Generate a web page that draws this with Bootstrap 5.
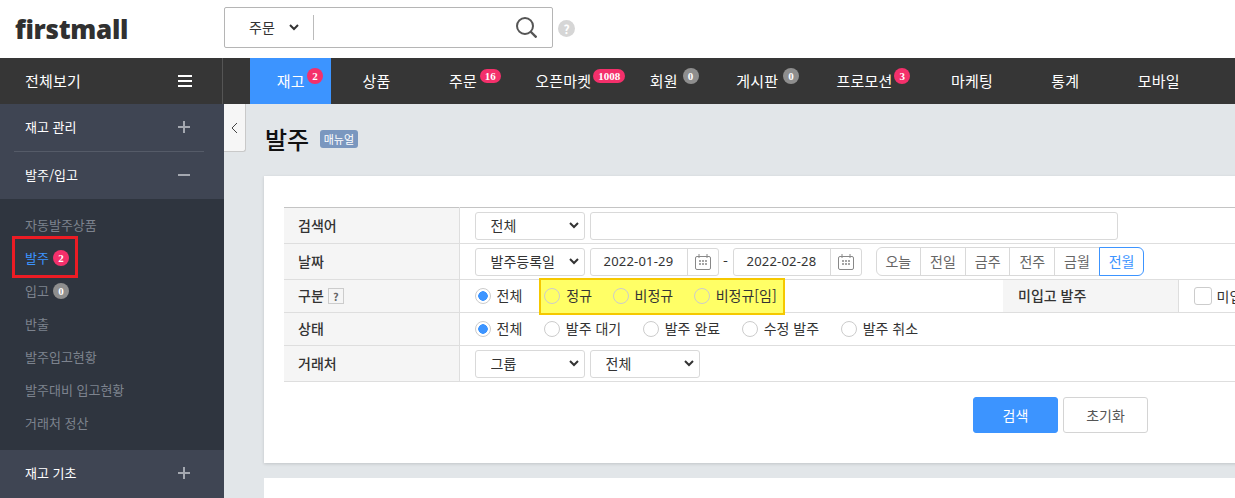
<!DOCTYPE html>
<html lang="ko">
<head>
<meta charset="UTF-8">
<meta name="viewport" content="width=device-width, initial-scale=1.0">
<title>발주</title>
<link rel="stylesheet" href="https://cdn.jsdelivr.net/npm/bootstrap@5.3.0/dist/css/bootstrap.min.css">
<style>
    html, body { height: 498px; overflow: hidden; }
    body { font-family: "Noto Sans CJK KR", "Noto Sans", sans-serif; font-size: 14px; color: #333; background: #e2e6e9; }
    .top-head { height: 58px; background: #fff; }
    .logo-word { width: 224px; padding-left: 15px; font-family: "Open Sans", sans-serif; font-weight: 800; font-size: 26px; letter-spacing: -0.3px; color: #303030; line-height: 58px; }
    .search-box { width: 329px; height: 41px; margin-top: 7px; border: 1px solid #b5b5b5; border-radius: 2px; }
    .search-type { width: 89px; height: 25px; padding-left: 24px; border-right: 1px solid #bbb; font-size: 14px; }
    .search-type svg { margin-left: 14px; }
    .search-icon { margin: 0 15px 0 auto; }
    .help-dot { width: 17px; height: 17px; margin: 20px 0 0 5px; border-radius: 50%; background: #d6d6d6; color: #fff; font-size: 12px; font-weight: 700; line-height: 17px; text-align: center; }
    .main-nav { height: 46px; background: #363636; color: #fff; font-size: 15px; letter-spacing: 0.2px; }
    .all-view { width: 223px; padding: 0 30px 0 25px; border-right: 1px solid #555; }
    .burger { width: 14px; height: 12px; border-top: 2px solid #fff; border-bottom: 2px solid #fff; position: relative; }
    .burger::after { content: ""; position: absolute; left: 0; right: 0; top: 3px; height: 2px; background: #fff; }
    .tab-list { padding-left: 25px; }
    .tab-item { position: relative; height: 46px; padding: 0 29.2px; line-height: 46px; white-space: nowrap; }
    .tab-item.is-on { margin: 0 2px; padding: 0 26.7px; background: #3c94ff; }
    .num-pill { position: absolute; top: 10px; min-width: 16px; height: 16px; padding: 0 4px; border-radius: 9px; background: #f4306b; color: #fff; font-family: "Liberation Serif", serif; font-size: 11px; font-weight: 700; letter-spacing: 0; line-height: 16px; text-align: center; }
    .num-pill.is-zero { background: #8e8e8e; }
    .num-pill.is-wide { top: 11px; height: 14px; line-height: 14px; padding: 0 5px; }
    .page-body { height: 394px; }
    .side-menu { width: 224px; flex: none; background: #3f4553; color: #fff; }
    .side-head { height: 47px; margin: 0 20px 0 14px; padding: 0 14px 2px 11px; font-size: 13px; }
    .side-head.has-line { height: 48px; border-bottom: 1px solid #555b68; }
    .side-sub { height: 251px; padding-top: 9px; background: #2f353f; }
    .side-link { position: relative; height: 33px; padding-left: 25px; gap: 4px; color: #7d838e; font-size: 13px; }
    .side-link.is-on { color: #3c94ff; }
    .side-link .num-pill { position: static; padding: 0; }
    .red-mark { position: absolute; left: 12px; top: -5px; width: 66px; height: 42px; border: 3px solid #ec1c24; }
    .collapse-tab { width: 22px; height: 48px; flex: none; background: #f6f6f6; border: 1px solid #c9c9c9; border-width: 0 1px 1px 0; border-radius: 0 0 3px 0; }
    .content-wrap { position: relative; min-width: 0; flex: 1; padding-left: 18px; }
    .title-line { height: 72px; gap: 11px; padding: 0 0 2px 1px; }
    .title-line h1 { margin: 0; font-size: 24px; font-weight: 500; color: #111; }
    .manual-tag { padding: 0 3.5px; height: 18px; border-radius: 3px; background: #7a97bf; color: #fff; font-size: 11px; line-height: 18px; }
    .form-panel { width: 1000px; height: 287px; padding: 31px 0 0 20px; background: #fff; box-shadow: 0 1px 3px rgba(0,0,0,.15); }
    .next-panel { width: 1000px; height: 60px; margin-top: 15px; background: #fff; }
    .search-table { width: 980px; table-layout: fixed; border-top: 1px solid #c4c4c4; border-collapse: collapse; }
    .search-table th, .search-table td { border-bottom: 1px solid #dedede; vertical-align: middle; white-space: nowrap; }
    .search-table th { padding-left: 14px; background: #f5f5f5; border-right: 1px solid #dedede; font-weight: 500; font-size: 14px; color: #333; }
    .search-table td { padding: 0 0 0 15px; }
    .search-table th.mid-th { padding-left: 15px; }
    .row-a { height: 36px; }
    .row-b { height: 33px; }
    .search-table .row-b th { padding-bottom: 2px; }
    .field-gap { gap: 5px; }
    .form-select.field-sel { width: 110px; height: 28px; padding: 0 20px 0 15px; border-color: #d9d9d9; border-radius: 3px; font-size: 14px; color: #333; background-image: url("data:image/svg+xml,%3csvg xmlns='http://www.w3.org/2000/svg' viewBox='0 0 10 7'%3e%3cpath d='M1 1l4 4 4-4' fill='none' stroke='%23333' stroke-width='2'/%3e%3c/svg%3e"); background-position: right 5px center; background-size: 10px 7px; }
    .form-control.field-in { height: 28px; padding: 0 10px; border-color: #d9d9d9; border-radius: 3px; font-size: 13px; color: #333; box-shadow: none; }
    .date-box { width: 129px; height: 28px; border: 1px solid #d9d9d9; border-radius: 3px; }
    .date-box.first-date { margin-left: 5px; }
    .date-box span { width: 98px; padding-left: 13px; font-family: "Noto Sans", sans-serif; font-size: 13px; letter-spacing: 0.2px; }
    .date-icon { width: 31px; height: 100%; border-left: 1px solid #d9d9d9; }
    .dash-sep { width: 14px; text-align: center; }
    .range-btns { margin-left: 14px; }
    .range-btns .btn { width: 45.67px; height: 29px; padding: 0; border-color: #d9d9d9; background: #fff; color: #666; font-size: 14px; line-height: 27px; }
    .range-btns .btn.is-on { border-color: #3c94ff; color: #3c94ff; z-index: 1; }
    .radio-line { gap: 21.5px; }
    .form-check.radio-item { display: flex; align-items: center; gap: 6px; min-height: 0; margin: 0; padding: 0; }
    .radio-item .form-check-input { float: none; width: 16px; height: 16px; margin: 0; border-color: #ccc; background-color: transparent; }
    .radio-item .form-check-input:checked { background-color: #fff; border-color: #ccc; background-image: radial-gradient(circle, #3c94ff 0 4.5px, transparent 5px); }
    .radio-item label { margin-bottom: 2px; color: #333; font-size: 14px; }
    .yellow-zone { gap: 20.5px; height: 37px; margin: -3px 0 -3px 17px; padding: 0 7px 0 4px; background: #ffff66; border: 1px solid #f5c800; outline: 1px solid #f5c800; outline-offset: -2px; }
    .q-mark { width: 16px; height: 16px; margin-left: 4px; border: 1px solid #ccc; color: #666; font-size: 11px; font-weight: 700; line-height: 14px; text-align: center; display: inline-block; }
    .check-box { width: 18px; height: 18px; margin-right: 5px; border-radius: 3px; border: 1px solid #ccc; }
    .act-row { gap: 5px; margin: 15px 0 0 689px; }
    .act-row .btn { width: 85px; height: 36px; padding: 0; border-radius: 3px; font-size: 14px; }
    .btn.act-search { background: #3c94ff; border-color: #3c94ff; color: #fff; }
    .btn.act-reset { background: #fff; border-color: #d4d4d4; color: #555; }
</style>
</head>
<body>

<div class="top-head d-flex">
    <div class="logo-word">firstmall</div>
    <div class="search-box d-flex align-items-center">
        <div class="search-type d-flex align-items-center">주문
            <svg width="10" height="7" viewBox="0 0 10 7"><path d="M1 1l4 4 4-4" fill="none" stroke="#333" stroke-width="2"/></svg>
        </div>
        <svg class="search-icon" width="21" height="21" viewBox="0 0 21 21"><circle cx="9" cy="9" r="8" fill="none" stroke="#555" stroke-width="2"/><path d="M14.5 14.5l6 6" stroke="#555" stroke-width="2.4"/></svg>
    </div>
    <div class="help-dot">?</div>
</div>

<div class="main-nav d-flex">
    <div class="all-view d-flex align-items-center justify-content-between">전체보기 <span class="burger"></span></div>
    <div class="tab-list d-flex">
        <div class="tab-item is-on">재고<span class="num-pill" style="left:57px">2</span></div>
        <div class="tab-item">상품</div>
        <div class="tab-item">주문<span class="num-pill is-wide" style="left:60px">16</span></div>
        <div class="tab-item">오픈마켓<span class="num-pill is-wide" style="left:87px">1008</span></div>
        <div class="tab-item">회원<span class="num-pill is-zero" style="left:62px">0</span></div>
        <div class="tab-item">게시판<span class="num-pill is-zero" style="left:76px">0</span></div>
        <div class="tab-item">프로모션<span class="num-pill" style="left:87px">3</span></div>
        <div class="tab-item">마케팅</div>
        <div class="tab-item">통계</div>
        <div class="tab-item">모바일</div>
    </div>
</div>

<div class="page-body d-flex">
    <aside class="side-menu">
        <div class="side-head has-line d-flex align-items-center justify-content-between">재고 관리
            <svg width="12" height="12" viewBox="0 0 12 12"><path d="M6 0v12M0 6h12" stroke="#a4a8b0" stroke-width="2"/></svg>
        </div>
        <div class="side-head d-flex align-items-center justify-content-between">발주/입고
            <svg width="12" height="12" viewBox="0 0 12 12"><path d="M0 6h12" stroke="#a4a8b0" stroke-width="2"/></svg>
        </div>
        <div class="side-sub">
            <div class="side-link d-flex align-items-center">자동발주상품</div>
            <div class="side-link is-on d-flex align-items-center">발주 <span class="num-pill">2</span><span class="red-mark"></span></div>
            <div class="side-link d-flex align-items-center">입고 <span class="num-pill is-zero">0</span></div>
            <div class="side-link d-flex align-items-center">반출</div>
            <div class="side-link d-flex align-items-center">발주입고현황</div>
            <div class="side-link d-flex align-items-center">발주대비 입고현황</div>
            <div class="side-link d-flex align-items-center">거래처 정산</div>
        </div>
        <div class="side-head d-flex align-items-center justify-content-between">재고 기초
            <svg width="12" height="12" viewBox="0 0 12 12"><path d="M6 0v12M0 6h12" stroke="#a4a8b0" stroke-width="2"/></svg>
        </div>
    </aside>
    <div class="collapse-tab d-flex align-items-center justify-content-center">
        <svg width="7" height="12" viewBox="0 0 7 12"><path d="M6 1L1 6l5 5" fill="none" stroke="#444" stroke-width="1"/></svg>
    </div>
    <main class="content-wrap">
        <div class="title-line d-flex align-items-center">
            <h1>발주</h1>
            <span class="manual-tag">매뉴얼</span>
        </div>
        <div class="form-panel">
            <table class="search-table">
                <colgroup><col style="width:175px"><col style="width:544px"><col style="width:175px"><col></colgroup>
                <tr class="row-a">
                    <th>검색어</th>
                    <td colspan="3"><div class="d-flex field-gap">
                        <select class="form-select field-sel"><option>전체</option></select>
                        <input class="form-control field-in" type="text" style="width:528px">
                    </div></td>
                </tr>
                <tr class="row-a">
                    <th>날짜</th>
                    <td colspan="3"><div class="d-flex align-items-center">
                        <select class="form-select field-sel"><option>발주등록일</option></select>
                        <div class="date-box first-date d-flex align-items-center">
                            <span>2022-01-29</span>
                            <div class="date-icon d-flex align-items-center justify-content-center">
                                <svg width="16" height="16" viewBox="0 0 16 16"><rect x="0.5" y="2.5" width="15" height="13" rx="1.5" fill="none" stroke="#888"/><path d="M4 0v4M12 0v4" stroke="#888"/><path d="M4 7h2M7 7h2M10 7h2M4 10h2M7 10h2M10 10h2" stroke="#888" stroke-width="1.4"/></svg>
                            </div>
                        </div>
                        <span class="dash-sep">-</span>
                        <div class="date-box d-flex align-items-center">
                            <span>2022-02-28</span>
                            <div class="date-icon d-flex align-items-center justify-content-center">
                                <svg width="16" height="16" viewBox="0 0 16 16"><rect x="0.5" y="2.5" width="15" height="13" rx="1.5" fill="none" stroke="#888"/><path d="M4 0v4M12 0v4" stroke="#888"/><path d="M4 7h2M7 7h2M10 7h2M4 10h2M7 10h2M10 10h2" stroke="#888" stroke-width="1.4"/></svg>
                            </div>
                        </div>
                        <div class="btn-group range-btns">
                            <button class="btn" type="button">오늘</button>
                            <button class="btn" type="button">전일</button>
                            <button class="btn" type="button">금주</button>
                            <button class="btn" type="button">전주</button>
                            <button class="btn" type="button">금월</button>
                            <button class="btn is-on" type="button">전월</button>
                        </div>
                    </div></td>
                </tr>
                <tr class="row-b">
                    <th>구분<span class="q-mark">?</span></th>
                    <td><div class="d-flex align-items-center">
                        <div class="form-check radio-item"><input class="form-check-input" type="radio" name="kind" id="k0" checked><label for="k0">전체</label></div>
                        <div class="yellow-zone d-flex align-items-center">
                            <div class="form-check radio-item"><input class="form-check-input" type="radio" name="kind" id="k1"><label for="k1">정규</label></div>
                            <div class="form-check radio-item"><input class="form-check-input" type="radio" name="kind" id="k2"><label for="k2">비정규</label></div>
                            <div class="form-check radio-item"><input class="form-check-input" type="radio" name="kind" id="k3"><label for="k3">비정규[임]</label></div>
                        </div>
                    </div></td>
                    <th class="mid-th">미입고 발주</th>
                    <td><div class="d-flex align-items-center"><span class="check-box"></span>미입고</div></td>
                </tr>
                <tr class="row-b">
                    <th>상태</th>
                    <td colspan="3"><div class="radio-line d-flex">
                        <div class="form-check radio-item"><input class="form-check-input" type="radio" name="st" id="s0" checked><label for="s0">전체</label></div>
                        <div class="form-check radio-item"><input class="form-check-input" type="radio" name="st" id="s1"><label for="s1">발주 대기</label></div>
                        <div class="form-check radio-item"><input class="form-check-input" type="radio" name="st" id="s2"><label for="s2">발주 완료</label></div>
                        <div class="form-check radio-item"><input class="form-check-input" type="radio" name="st" id="s3"><label for="s3">수정 발주</label></div>
                        <div class="form-check radio-item"><input class="form-check-input" type="radio" name="st" id="s4"><label for="s4">발주 취소</label></div>
                    </div></td>
                </tr>
                <tr class="row-a">
                    <th>거래처</th>
                    <td colspan="3"><div class="d-flex field-gap">
                        <select class="form-select field-sel"><option>그룹</option></select>
                        <select class="form-select field-sel"><option>전체</option></select>
                    </div></td>
                </tr>
            </table>
            <div class="act-row d-flex">
                <button class="btn act-search" type="button">검색</button>
                <button class="btn act-reset" type="button">초기화</button>
            </div>
        </div>
        <div class="next-panel"></div>
    </main>
</div>

<script src="https://cdn.jsdelivr.net/npm/bootstrap@5.3.0/dist/js/bootstrap.bundle.min.js"></script>
</body>
</html>
